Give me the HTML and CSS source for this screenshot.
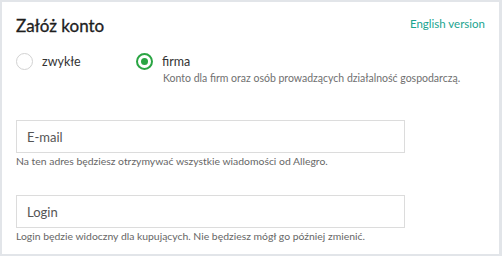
FILE: index.html
```html
<!DOCTYPE html>
<html lang="pl">
<head>
<meta charset="utf-8">
<title>Załóż konto</title>
<link rel="stylesheet" href="styles.css">
</head>
<body>
<div class="card">
  <div class="header">
    <h1 class="title">Załóż konto</h1>
    <a class="lang" href="#">English version</a>
  </div>
  <div class="types">
    <label class="option option-first">
      <span class="radio"></span>
      <span class="option-label">zwykłe</span>
    </label>
    <label class="option">
      <span class="radio radio-on"></span>
      <span class="option-label">firma</span>
    </label>
  </div>
  <p class="type-desc">Konto dla firm oraz osób prowadzących działalność gospodarczą.</p>
  <div class="field field-email">
    <div class="input"><span class="placeholder">E-mail</span></div>
    <p class="hint">Na ten adres będziesz otrzymywać wszystkie wiadomości od Allegro.</p>
  </div>
  <div class="field field-login">
    <div class="input"><span class="placeholder">Login</span></div>
    <p class="hint">Login będzie widoczny dla kupujących. Nie będziesz mógł go później zmienić.</p>
  </div>
</div>
</body>
</html>
```

FILE: styles.css
```css
html, body {
  margin: 0;
  padding: 0;
}
body {
  background: #e2e5e9;
  width: 502px;
  height: 256px;
  padding: 2px 3px 2px 2px;
  box-sizing: border-box;
  font-family: Lato, "Open Sans", sans-serif;
}
.card {
  background: #ffffff;
  height: 252px;
  box-sizing: border-box;
  padding: 12px 14px 0 14px;
}
.header {
  display: flex;
  justify-content: space-between;
  align-items: flex-start;
}
.title {
  margin: 0;
  font-size: 17px;
  line-height: 24px;
  font-weight: 400;
  color: #1e1e1e;
  -webkit-text-stroke: 0.3px #1e1e1e;
}
.lang {
  margin-top: 1px;
  font-size: 11.5px;
  line-height: 18px;
  color: #1aa48f;
  text-decoration: none;
}
.types {
  display: flex;
  align-items: center;
  margin-top: 15px;
  height: 17px;
}
.option {
  display: flex;
  align-items: center;
  gap: 9px;
}
.option-first {
  width: 120px;
}
.radio {
  width: 17px;
  height: 17px;
  box-sizing: border-box;
  border: 1px solid #d2d2d2;
  border-radius: 50%;
  display: flex;
  align-items: center;
  justify-content: center;
}
.radio-on {
  border: 2px solid #2aa543;
}
.radio-on::after {
  content: "";
  width: 7px;
  height: 7px;
  border-radius: 50%;
  background: #2aa543;
}
.option-label {
  font-size: 12.5px;
  line-height: 18px;
  color: #333333;
}
.type-desc {
  margin: 1px 0 0 147px;
  font-size: 10.5px;
  line-height: 15px;
  color: #707070;
}
.field-email {
  margin-top: 34px;
}
.field-login {
  margin-top: 26px;
}
.input {
  width: 389px;
  height: 33px;
  box-sizing: border-box;
  border: 1px solid #dcdcdc;
  padding-left: 10px;
  display: flex;
  align-items: center;
}
.placeholder {
  font-size: 13px;
  line-height: 18px;
  color: #555555;
}
.hint {
  margin: 1px 0 0 0;
  font-size: 10.4px;
  line-height: 15px;
  color: #666666;
}
```
